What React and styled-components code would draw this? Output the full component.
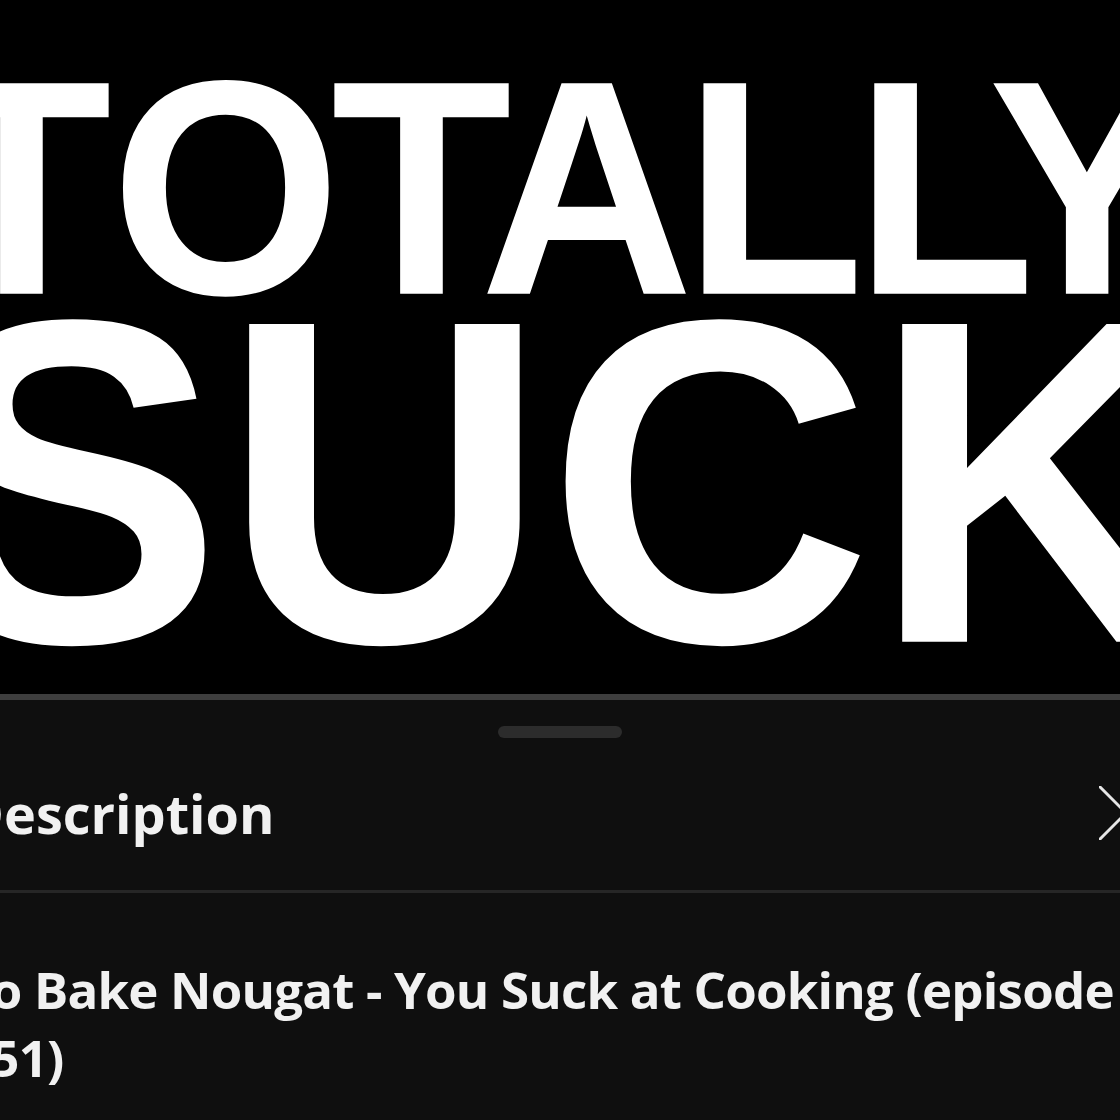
import React from 'react';
import styled, { createGlobalStyle } from 'styled-components';

const Global = createGlobalStyle`
  html, body {
    margin: 0;
    padding: 0;
    background: #0f0f0f;
  }
`

const Screen = styled.div`
  width: 1120px;
  height: 1120px;
  overflow: hidden;
  background: #0f0f0f;
  display: flex;
  flex-direction: column;
`

const Video = styled.div`
  height: 694px;
  flex-shrink: 0;
  background: #000;
  overflow: hidden;
  display: flex;
  flex-direction: column;
  gap: 14px;
  padding-top: 82px;
  box-sizing: border-box;
`

const BigLine = styled.div`
  font-family: "Liberation Sans", Arial, sans-serif;
  font-weight: 700;
  color: #fff;
  white-space: nowrap;
  font-size: ${p => p.size}px;
  line-height: ${p => p.lh}px;
  letter-spacing: ${p => p.track}px;
  margin-left: ${p => p.shift}px;
  transform: scaleY(${p => p.stretch});
  transform-origin: 0 100%;
`

// per-letter spacing so the wordmark sits like the frame in the video
const Kern = styled.span`
  letter-spacing: ${p => p.track}px;
`

const Track = styled.div`
  height: 6px;
  flex-shrink: 0;
  background: #3e3e3e;
`

const Sheet = styled.div`
  flex: 1;
  background: #0f0f0f;
  display: flex;
  flex-direction: column;
`

const Handle = styled.div`
  align-self: center;
  width: 124px;
  height: 12px;
  border-radius: 6px;
  background: #2c2c2c;
  margin-top: 26px;
`

const Header = styled.div`
  display: flex;
  align-items: center;
  justify-content: space-between;
  margin-left: -36px;
  width: 1189px;
  padding-top: 40px;
  padding-bottom: 42px;
`

const Heading = styled.div`
  font-family: "Open Sans", "Noto Sans", sans-serif;
  font-weight: 700;
  font-size: 54px;
  line-height: 70px;
  color: #f1f1f1;
`

const Close = styled.button`
  background: none;
  border: 0;
  padding: 0;
  width: 54px;
  height: 54px;
  color: #e6e6e6;
  display: flex;
`

const Divider = styled.div`
  height: 3px;
  background: #262626;
`

const Body = styled.div`
  margin-left: -38px;
  width: 1180px;
  padding-top: 62px;
`

const Title = styled.div`
  font-family: "Open Sans", "Noto Sans", sans-serif;
  font-weight: 700;
  font-size: 51px;
  line-height: 68px;
  letter-spacing: -0.8px;
  color: #f1f1f1;
`

export default function App() {
  return (
    <Screen>
      <Global />
      <Video>
        <BigLine size={296} lh={220} track={-10} shift={-69} stretch={1.034}>
          <Kern track={-1}>T</Kern>OTAL<Kern track={-47}>L</Kern>Y
        </BigLine>
        <BigLine size={450} lh={340} track={0} shift={-78} stretch={1.026}>SUCK</BigLine>
      </Video>
      <Track />
      <Sheet>
        <Handle />
        <Header>
          <Heading>Description</Heading>
          <Close aria-label="Close">
            <svg width="54" height="54" viewBox="0 0 54 54" fill="none" stroke="currentColor" strokeWidth="3" strokeLinecap="round">
              <path d="M1 1 L53 53 M53 1 L1 53" />
            </svg>
          </Close>
        </Header>
        <Divider />
        <Body>
          <Title>To Bake Nougat - You Suck at Cooking (episode 151)</Title>
        </Body>
      </Sheet>
    </Screen>
  );
}
